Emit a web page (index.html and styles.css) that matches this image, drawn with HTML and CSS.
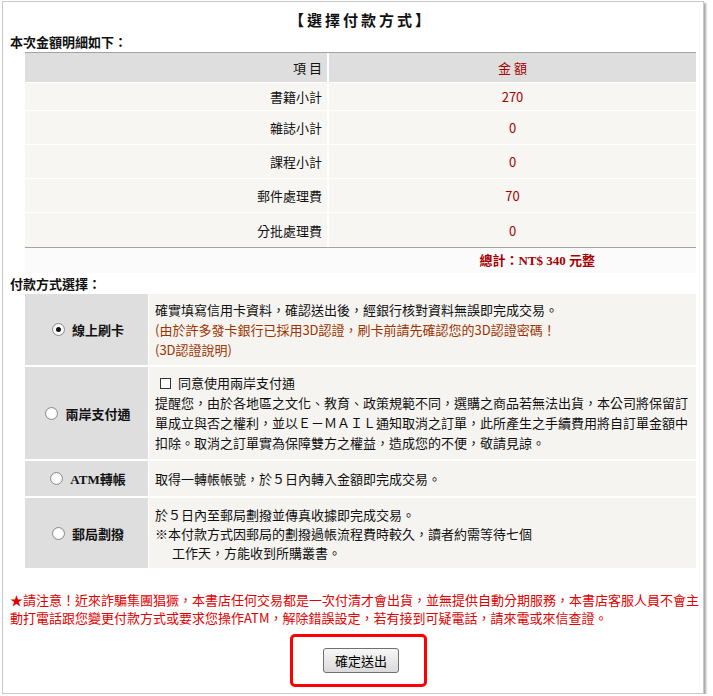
FILE: index.html
```html
<!DOCTYPE html>
<html lang="zh-Hant">
<head>
<meta charset="utf-8">
<title>選擇付款方式</title>
<link rel="stylesheet" href="styles.css">
</head>
<body>
<div class="frame">
  <h1 class="title">【選擇付款方式】</h1>
  <div class="sec">本次金額明細如下：</div>
  <div class="amt">
    <div class="arow head"><div class="k">項 目</div><div class="v">金 額</div></div>
    <div class="arow r1"><div class="k">書籍小計</div><div class="v">270</div></div>
    <div class="arow"><div class="k">雜誌小計</div><div class="v">0</div></div>
    <div class="arow"><div class="k">課程小計</div><div class="v">0</div></div>
    <div class="arow"><div class="k">郵件處理費</div><div class="v">70</div></div>
    <div class="arow r5"><div class="k">分批處理費</div><div class="v">0</div></div>
  </div>
  <div class="total">總計：NT$ 340 元整</div>
  <div class="sec sec2">付款方式選擇：</div>
  <div class="pay">
    <div class="prow p1">
      <div class="opt"><span class="radio on"></span><span class="lbl">線上刷卡</span></div>
      <div class="desc">
        <div>確實填寫信用卡資料，確認送出後，經銀行核對資料無誤即完成交易。</div>
        <div class="note">(由於許多發卡銀行已採用3D認證，刷卡前請先確認您的3D認證密碼！</div>
        <div class="note">(3D認證說明)</div>
      </div>
    </div>
    <div class="prow p2">
      <div class="opt"><span class="radio"></span><span class="lbl">兩岸支付通</span></div>
      <div class="desc">
        <div class="chkline"><span class="chk"></span>同意使用兩岸支付通</div>
        <div>提醒您，由於各地區之文化、教育、政策規範不同，選購之商品若無法出貨，本公司將保留訂</div>
        <div>單成立與否之權利，並以Ｅ－ＭＡＩＬ通知取消之訂單，此所產生之手續費用將自訂單金額中</div>
        <div>扣除。取消之訂單實為保障雙方之權益，造成您的不便，敬請見諒。</div>
      </div>
    </div>
    <div class="prow p3">
      <div class="opt"><span class="radio"></span><span class="lbl serif">ATM轉帳</span></div>
      <div class="desc">
        <div>取得一轉帳帳號，於５日內轉入金額即完成交易。</div>
      </div>
    </div>
    <div class="prow p4">
      <div class="opt"><span class="radio"></span><span class="lbl">郵局劃撥</span></div>
      <div class="desc">
        <div>於５日內至郵局劃撥並傳真收據即完成交易。</div>
        <div>※本付款方式因郵局的劃撥過帳流程費時較久，讀者約需等待七個</div>
        <div class="indent">工作天，方能收到所購叢書。</div>
      </div>
    </div>
  </div>
  <p class="warn">★請注意！近來詐騙集團猖獗，本書店任何交易都是一次付清才會出貨，並無提供自動分期服務，本書店客服人員不會主<br>動打電話跟您變更付款方式或要求您操作ATM，解除錯誤設定，若有接到可疑電話，請來電或來信查證。</p>
  <div class="actions">
    <div class="mark"><button class="btn" type="button">確定送出</button></div>
  </div>
</div>
</body>
</html>
```

FILE: styles.css
```css
* { box-sizing: border-box; }
html, body { margin: 0; padding: 0; background: #fff; }
body {
  font-family: "Noto Sans CJK TC", "Noto Sans", sans-serif;
  font-size: 13px;
  color: #111;
}
.frame {
  margin: 1px 0 0 2px;
  width: 702px;
  height: 693px;
  border: 1px solid #c9c9c9;
  box-shadow: 2px 2px 2px rgba(0, 0, 0, 0.35);
  padding: 0 7px;
  background: #fff;
}
.title {
  margin: 7px 0 0;
  font-size: 15px;
  line-height: 22px;
  font-weight: bold;
  text-align: center;
  letter-spacing: 3px;
  padding-left: 16px;
  color: #111;
}
.sec {
  font-weight: bold;
  line-height: 16px;
  margin-top: 3px;
}
.amt {
  margin: 2px 0 0 15px;
  width: 671px;
  border-top: 1px solid #a3a3a3;
  border-bottom: 1px solid #a3a3a3;
  display: flex;
  flex-direction: column;
  gap: 1px;
}
.arow {
  display: grid;
  grid-template-columns: 302px 1fr;
  column-gap: 2px;
  height: 33px;
}
.arow > div {
  display: flex;
  align-items: center;
  background: #f7f6f3;
}
.arow.head { height: 29px; }
.arow.r1 { height: 27px; }
.arow.r5 { height: 34px; }
.arow.head > div { background: #dedede; }
.k { justify-content: flex-end; padding-right: 5px; }
.v { justify-content: center; color: #a50000; }
.total {
  margin-left: 15px;
  width: 671px;
  height: 25px;
  line-height: 25px;
  background: #fbfbfb;
  text-align: right;
  padding-right: 101px;
  font-weight: bold;
  color: #a50000;
  font-family: "Liberation Serif", "Noto Sans CJK TC", serif;
}
.sec2 { margin-top: 3px; }
.pay {
  margin: 2px 0 0 15px;
  width: 671px;
  display: flex;
  flex-direction: column;
  gap: 2px;
}
.prow {
  display: grid;
  grid-template-columns: 123px 1fr;
  column-gap: 1px;
}
.p1 { height: 71px; }
.p2 { height: 92px; }
.p3 { height: 35px; }
.p4 { height: 70px; }
.opt {
  background: #dedede;
  display: flex;
  align-items: center;
  justify-content: center;
  gap: 7px;
  padding-left: 3px;
}
.lbl { font-weight: bold; color: #111; }
.lbl.serif { font-family: "Liberation Serif", "Noto Sans CJK TC", serif; }
.radio {
  position: relative;
  flex: none;
  width: 13px;
  height: 13px;
  border-radius: 50%;
  border: 1px solid #8d8d8d;
  background: radial-gradient(circle at 50% 50%, #ffffff 45%, #e3e3e3 100%);
}
.radio.on::after {
  content: "";
  position: absolute;
  left: 3px;
  top: 3px;
  width: 5px;
  height: 5px;
  border-radius: 50%;
  background: #111;
}
.desc {
  background: #f5f4f0;
  display: flex;
  flex-direction: column;
  justify-content: center;
  padding-left: 6px;
  line-height: 20px;
  white-space: nowrap;
}
.p4 .desc { line-height: 19px; }
.note { color: #9c3300; }
.chkline { display: flex; align-items: center; }
.chk {
  display: inline-block;
  width: 11px;
  height: 11px;
  border: 1px solid #333;
  background: #fff;
  margin: 0 7px 0 5px;
}
.indent { padding-left: 17px; }
.warn {
  margin: 23px 0 0;
  color: #e00000;
  line-height: 18px;
  white-space: nowrap;
}
.actions {
  margin-top: 7px;
  display: flex;
  padding-left: 280px;
}
.mark {
  width: 137px;
  height: 53px;
  border: 3px solid #f00;
  border-radius: 5px;
  padding: 11px 0 0 30px;
}
.btn {
  display: block;
  width: 76px;
  height: 25px;
  padding: 0;
  font-family: "Noto Sans CJK TC", sans-serif;
  font-size: 13px;
  line-height: 23px;
  color: #000;
  border: 1px solid #707070;
  border-radius: 3px;
  background: linear-gradient(#f7f7f7, #dadada);
}
```
